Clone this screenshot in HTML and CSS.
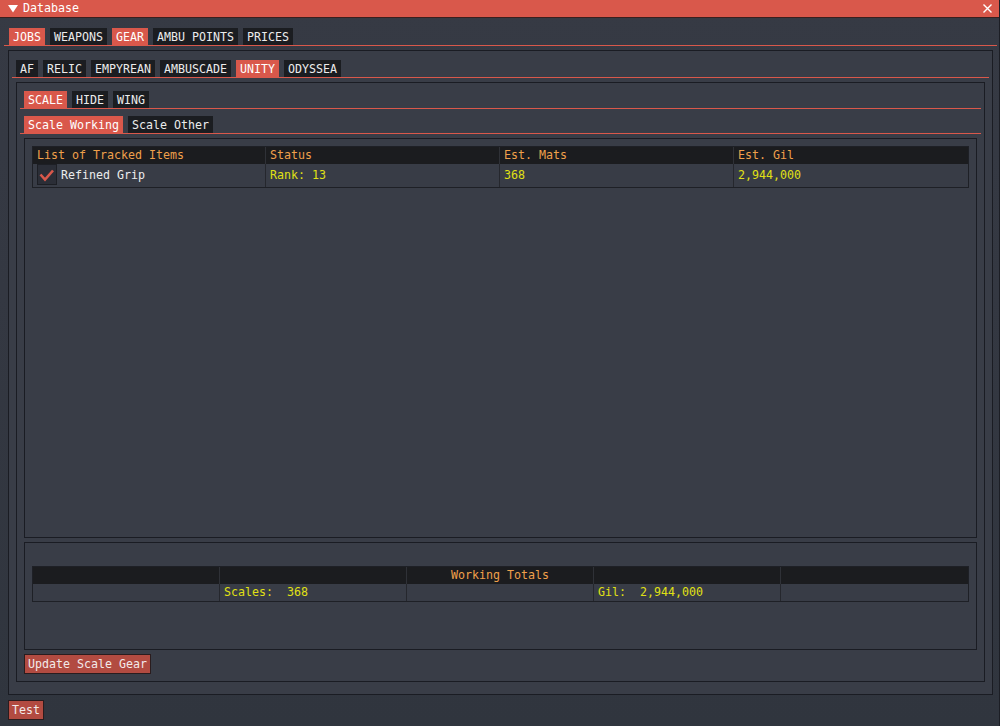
FILE: index.html
```html
<!DOCTYPE html>
<html>
<head>
<meta charset="utf-8">
<link rel="stylesheet" href="styles.css">
</head>
<body>
<div class="window">
  <div class="titlebar">
    <svg class="tri" width="10" height="8" viewBox="0 0 10 8"><polygon points="0,0 10,0 5,7.5" fill="#ffffff"/></svg>
    <span class="title">Database</span>
    <svg class="close" width="9" height="9" viewBox="0 0 9 9"><path d="M0.5 0.5 L8.5 8.5 M8.5 0.5 L0.5 8.5" stroke="#ffffff" stroke-width="1.4"/></svg>
  </div>
  <div class="win-content">
    <div class="tabbar top">
      <span class="tab active">JOBS</span>
      <span class="tab">WEAPONS</span>
      <span class="tab active">GEAR</span>
      <span class="tab">AMBU POINTS</span>
      <span class="tab">PRICES</span>
    </div>
    <div class="child c1">
      <div class="tabbar">
        <span class="tab">AF</span>
        <span class="tab">RELIC</span>
        <span class="tab">EMPYREAN</span>
        <span class="tab">AMBUSCADE</span>
        <span class="tab active">UNITY</span>
        <span class="tab">ODYSSEA</span>
      </div>
      <div class="child c2">
        <div class="tabbar">
          <span class="tab active">SCALE</span>
          <span class="tab">HIDE</span>
          <span class="tab">WING</span>
        </div>
        <div class="tabbar tb4">
          <span class="tab active">Scale Working</span>
          <span class="tab">Scale Other</span>
        </div>
        <div class="child c3">
          <div class="tbl">
            <div class="thead cols4">
              <div class="cell">List of Tracked Items</div>
              <div class="cell">Status</div>
              <div class="cell">Est. Mats</div>
              <div class="cell">Est. Gil</div>
            </div>
            <div class="trow cols4 tall">
              <div class="cell item">
                <span class="checkbox"><svg width="20" height="21" viewBox="0 0 20 21"><polyline points="3.5,10.5 8,15.5 16,6.5" fill="none" stroke="#d9584b" stroke-width="2.6"/></svg></span>
                <span class="white">Refined Grip</span>
              </div>
              <div class="cell yellow">Rank: 13</div>
              <div class="cell yellow">368</div>
              <div class="cell yellow">2,944,000</div>
            </div>
          </div>
        </div>
        <div class="child c4">
          <div class="tbl">
            <div class="thead cols5">
              <div class="cell"></div>
              <div class="cell"></div>
              <div class="cell center">Working Totals</div>
              <div class="cell"></div>
              <div class="cell"></div>
            </div>
            <div class="trow cols5">
              <div class="cell"></div>
              <div class="cell yellow">Scales:  368</div>
              <div class="cell"></div>
              <div class="cell yellow">Gil:  2,944,000</div>
              <div class="cell"></div>
            </div>
          </div>
        </div>
        <button class="btn update">Update Scale Gear</button>
      </div>
    </div>
    <button class="btn test">Test</button>
  </div>
</div>
</body>
</html>
```
FILE: styles.css
```css
* { box-sizing: border-box; }
html, body { margin: 0; padding: 0; }
body {
  width: 1000px;
  height: 726px;
  overflow: hidden;
  background: #2d323b;
  font-family: "DejaVu Sans Mono", "Liberation Mono", monospace;
  font-size: 11.63px;
  color: #e8e8e8;
}
.window {
  width: 1000px;
  height: 726px;
  border-right: 1px solid #1c1e25;
  background: linear-gradient(180deg, #363a44 0%, #343842 40%, #30353e 100%);
}
.titlebar {
  height: 18px;
  background: #d9584b;
  border-bottom: 1px solid #3a1f1e;
  display: flex;
  align-items: center;
  padding-left: 8px;
  padding-right: 7px;
}
.tri { display: block; }
.title {
  margin-left: 5px;
  line-height: 17px;
  color: #ffffff;
  flex: 1;
}
.close { display: block; margin-bottom: 1px; }
.win-content {
  padding: 9px 6px 0 8px;
}
.tabbar {
  display: flex;
  gap: 5px;
  margin: 0 -4px;
  padding: 0 4px;
  border-bottom: 1px solid #d9584b;
}
.tabbar.top { padding-left: 5px; margin-top: 1px; }
.tab {
  height: 17px;
  line-height: 18px;
  padding: 0 4px;
  background: #1b1d21;
  color: #ececec;
  white-space: pre;
}
.tab.active { background: #d9584b; color: #ffffff; }
.child {
  border: 1px solid #1a1c23;
}
.c1 {
  margin-top: 4px;
  padding: 9px 7px 12px 7px;
  background: #393d47;
}
.c2 {
  margin-top: 4px;
  padding: 8px 7px 7px 7px;
}
.tb4 { margin-top: 7px; }
.c3 {
  margin-top: 4px;
  height: 400px;
  padding: 7px;
}
.c4 {
  margin-top: 4px;
  height: 108px;
  padding: 23px 7px 7px 7px;
}
.tbl {
  border: 1px solid #1e2026;
  background: #383c46;
}
.cols4 { display: grid; grid-template-columns: 232px 234px 234px 1fr; }
.cols5 { display: grid; grid-template-columns: 186px 187px 187px 187px 1fr; }
.thead {
  height: 17px;
  background: #1b1c1f;
  color: #f0a04b;
}
.thead .cell { border-left: 1px solid #2f3137; }
.trow { height: 17px; }
.trow.tall { height: 23px; }
.trow .cell { border-left: 1px solid #25272d; }
.cell {
  line-height: 17px;
  padding-left: 4px;
  white-space: pre;
  overflow: hidden;
}
.thead .cell:first-child, .trow .cell:first-child { border-left: none; }
.trow.tall .cell { line-height: 22px; }
.center { text-align: center; padding-left: 0; }
.item { display: flex; align-items: flex-start; gap: 4px; }
.checkbox {
  display: block;
  width: 20px;
  height: 21px;
  background: #2b2e37;
  border: 1px solid #1d1f25;
}
.checkbox svg { display: block; margin: -1px; }
.white { color: #ececec; }
.yellow { color: #e0e014; }
.btn {
  display: block;
  font-family: inherit;
  font-size: inherit;
  height: 20px;
  line-height: 18px;
  padding: 0 3px;
  border: 1px solid #2a1c1e;
  background: #b24b41;
  color: #f2eaea;
  margin: 0;
  white-space: pre;
}
.update { margin-top: 4px; }
.test { margin-top: 5px; }
```
